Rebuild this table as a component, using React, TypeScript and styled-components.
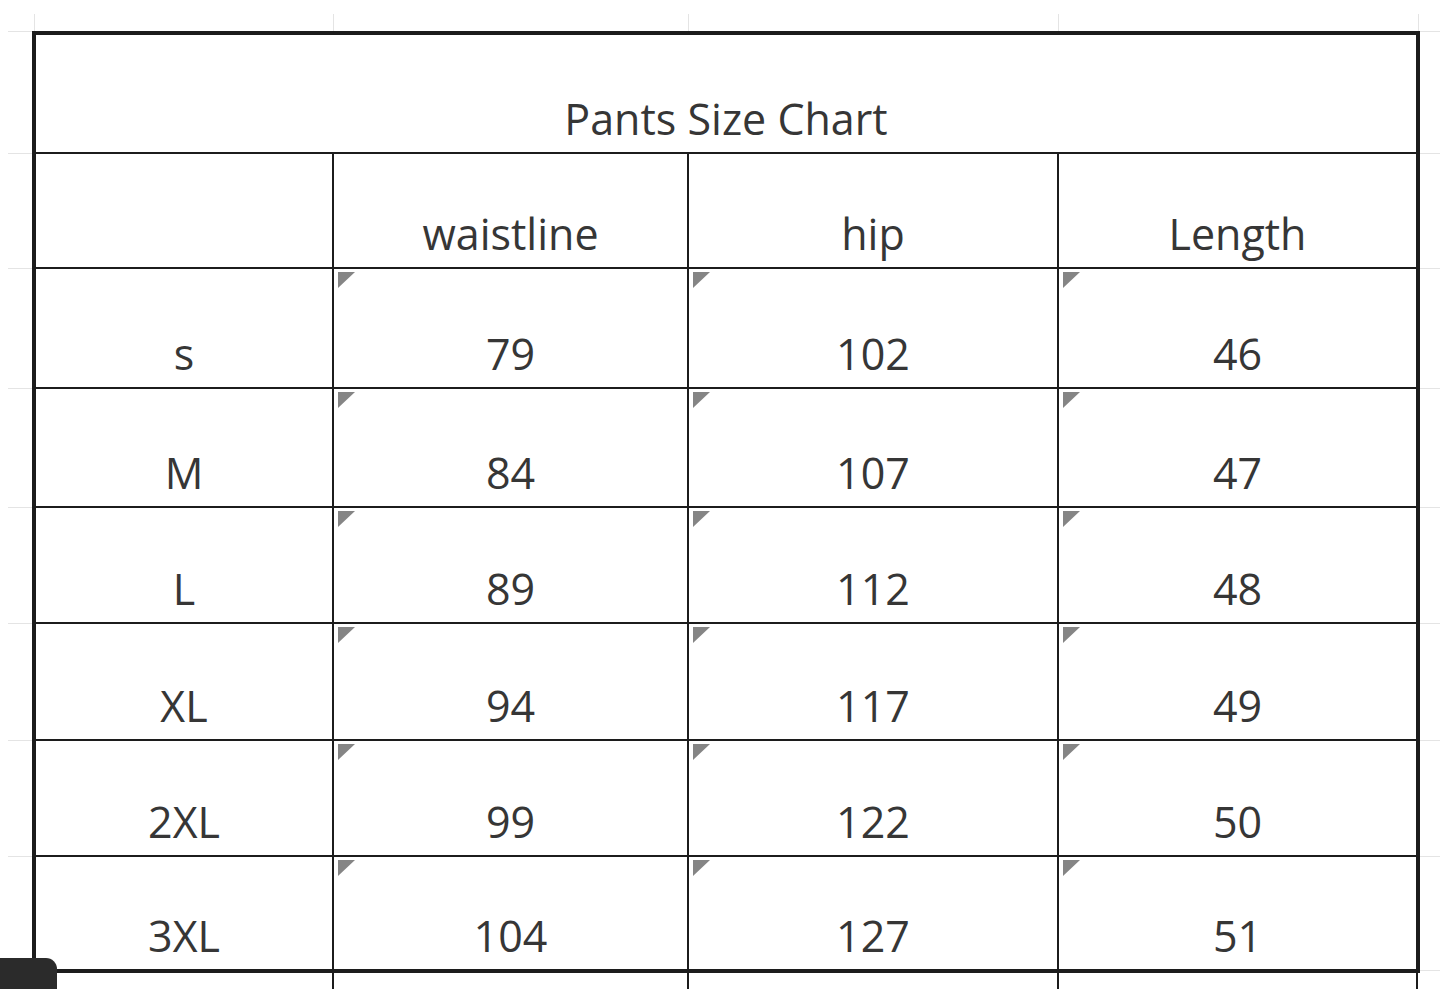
import React from "react";
import styled, {createGlobalStyle} from "styled-components";

// sheet geometry, taken from the screenshot
const COLS = [296, 353, 368, 357];
const ROWS = [117, 113, 118, 117, 114, 115, 114, 112];
const TICKS = [299, 355, 370, 360, 20];
const LINE = "#1c1c1c";
const FAINT = "#e4e4e4";

const GlobalStyle = createGlobalStyle`
  html, body {
    margin: 0;
    padding: 0;
    background: #ffffff;
    overflow: hidden;
  }
  body {
    font-family: "Open Sans", "Noto Sans", sans-serif;
  }
`;

const Page = styled.div`
  width: 1445px;
  height: 989px;
  position: relative;
  overflow: hidden;
  background: #fff;
`;

const TopStrip = styled.div`
  display: flex;
  height: 17px;
  margin-top: 14px;
  padding-left: 34px;
`;

const Tick = styled.div<{ $w: number }>`
  width: ${p => p.$w}px;
  flex: none;
  box-sizing: border-box;
  border-left: 1px solid ${FAINT};
`;

const Middle = styled.div`
  display: flex;
  align-items: flex-start;
`;

const Gutter = styled.div<{ $side: "left" | "right" }>`
  width: ${p => (p.$side === "left" ? 24 : 20)}px;
  margin-left: ${p => (p.$side === "left" ? 8 : 0)}px;
  display: flex;
  flex-direction: column;
`;

const GutterRow = styled.div<{ $h: number }>`
  height: ${p => p.$h}px;
  flex: none;
  border-top: 1px solid ${FAINT};
  box-sizing: border-box;
`;

const Sheet = styled.div`
  display: flex;
  flex-direction: column;
`;

const Table = styled.div`
  display: grid;
  grid-template-columns: ${COLS.map(c => c + "px").join(" ")};
  grid-template-rows: ${ROWS.map(r => r + "px").join(" ")};
  gap: 2px;
  background: ${LINE};
  border: 4px solid ${LINE};
`;

const Cell = styled.div<{ $marked?: boolean; $span?: number }>`
  position: relative;
  background: #fff;
  grid-column: ${p => (p.$span ? `span ${p.$span}` : "auto")};
  display: flex;
  align-items: flex-end;
  justify-content: center;
  padding-bottom: 12px;
  box-sizing: border-box;
  color: #363636;
  font-size: 43px;
  line-height: 1;
  letter-spacing: 0;

  &::before {
    content: "";
    display: ${p => (p.$marked ? "block" : "none")};
    position: absolute;
    left: 4px;
    top: 3px;
    width: 0;
    height: 0;
    border-top: 16px solid #858585;
    border-right: 17px solid transparent;
  }
`;

const NextRow = styled.div`
  display: grid;
  grid-template-columns: ${COLS.map(c => c + "px").join(" ")};
  gap: 2px;
  height: 20px;
  background: ${LINE};
  padding: 0 2px;
  margin: 0 2px;
`;

const Blank = styled.div`
  background: #fff;
`;

const Dock = styled.div`
  position: absolute;
  left: 0;
  top: 958px;
  width: 57px;
  height: 40px;
  background: #2b2b2b;
  border-top-right-radius: 11px;
`;

const data: string[][] = [
  ["s", "79", "102", "46"],
  ["M", "84", "107", "47"],
  ["L", "89", "112", "48"],
  ["XL", "94", "117", "49"],
  ["2XL", "99", "122", "50"],
  ["3XL", "104", "127", "51"],
];

export default function App() {
  const gutterRows = [4 + ROWS[0] + 1, ...ROWS.slice(1).map(r => r + 2), 40];

  return (
    <Page>
      <GlobalStyle/>
      <TopStrip>
        {TICKS.map((w, i) => <Tick key={i} $w={w}/>)}
      </TopStrip>
      <Middle>
        <Gutter $side="left">
          {gutterRows.map((h, i) => <GutterRow key={i} $h={h}/>)}
        </Gutter>
        <Sheet>
          <Table>
            <Cell $span={4}>Pants Size Chart</Cell>
            <Cell/>
            <Cell>waistline</Cell>
            <Cell>hip</Cell>
            <Cell>Length</Cell>
            {data.map(row =>
              row.map((v, j) => (
                <Cell key={row[0] + j} $marked={j > 0}>{v}</Cell>
              ))
            )}
          </Table>
          <NextRow>
            {COLS.map((_, i) => <Blank key={i}/>)}
          </NextRow>
        </Sheet>
        <Gutter $side="right">
          {gutterRows.map((h, i) => <GutterRow key={i} $h={h}/>)}
        </Gutter>
      </Middle>
      <Dock/>
    </Page>
  );
}
